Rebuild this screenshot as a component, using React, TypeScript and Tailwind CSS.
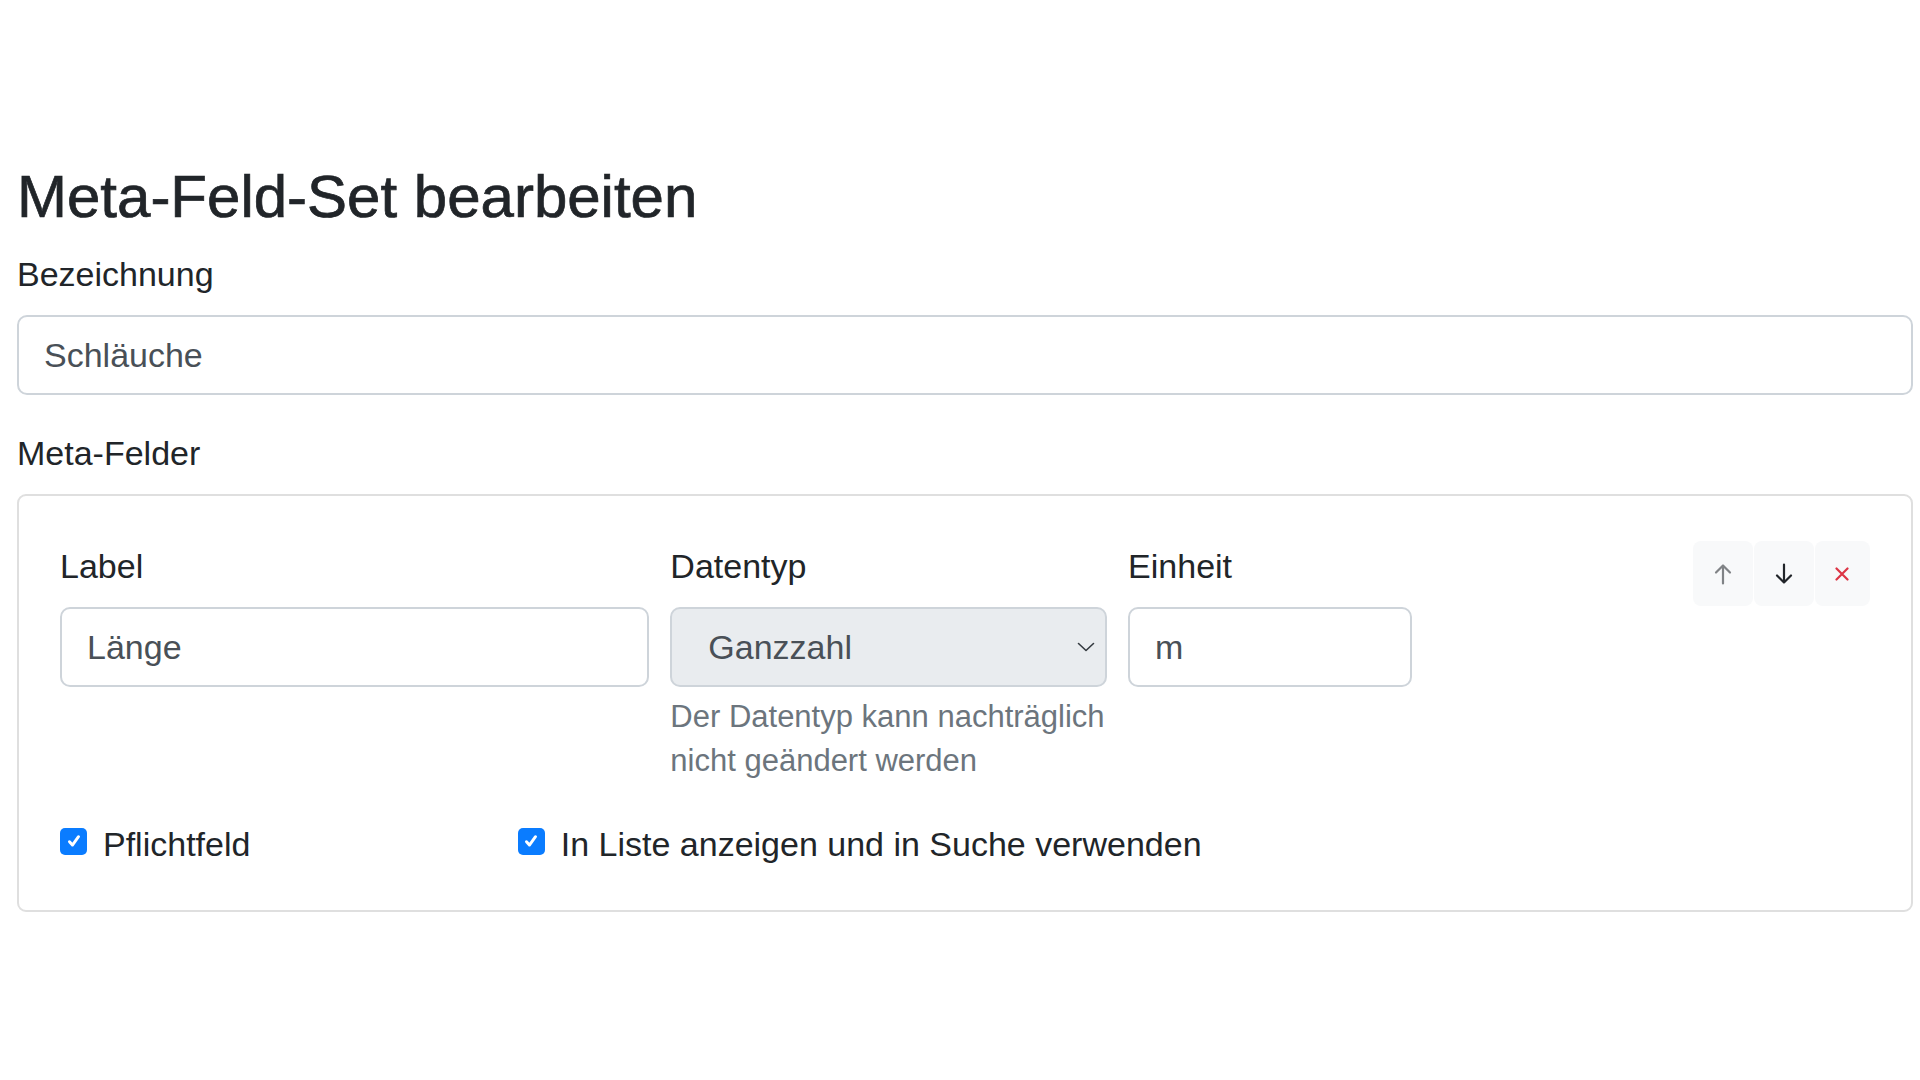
import React from "react";

const font = { fontFamily: '"Liberation Sans", Arial, sans-serif' };

function FieldLabel({ children }: { children: React.ReactNode }) {
  return <label className="block text-[34px] leading-[50px] text-[#212529] mb-[16px]">{children}</label>;
}

function TextInput({ value, className = "" }: { value: string; className?: string }) {
  return (
    <div
      className={`h-[80px] flex items-center px-[25px] bg-white border-2 border-[#ced4da] rounded-[10px] text-[34px] text-[#495057] ${className}`}
    >
      {value}
    </div>
  );
}

function Checkbox({ label }: { label: string }) {
  return (
    <label className="flex items-center gap-[16px] text-[34px] leading-[50px] text-[#212529]">
      <span className="w-[27px] h-[27px] rounded-[5px] bg-[#0a7cff] flex items-center justify-center -mt-[6px]">
        <svg width="18" height="18" viewBox="0 0 16 16" fill="none">
          <path d="M4 8.6l2.6 3L12 4.2" stroke="white" strokeWidth="2.6" strokeLinecap="round" strokeLinejoin="round" />
        </svg>
      </span>
      {label}
    </label>
  );
}

function IconButton({ children, className = "" }: { children: React.ReactNode; className?: string }) {
  return (
    <button className={`h-[65px] flex items-center justify-center bg-[#f8f9fa] rounded-[8px] ${className}`}>
      {children}
    </button>
  );
}

// arrow with a long shaft and open chevron head; rotate for "down"
function Arrow({ color, down = false }: { color: string; down?: boolean }) {
  return (
    <svg width="18" height="22" viewBox="0 0 18 22" fill="none" className={down ? "rotate-180" : ""}>
      <path d="M9 2.5V20.5M2 9.5L9 2.5L16 9.5" stroke={color} strokeWidth="2.2" strokeLinecap="round" strokeLinejoin="round" />
    </svg>
  );
}

export default function App() {
  return (
    <div className="min-h-screen bg-white pl-[17px] pr-[7px] pt-[161px]" style={font}>
      <h2 className="text-[60px] leading-[72px] font-medium text-[#212529] mb-[16px] [-webkit-text-stroke:0.7px_#212529]">
        Meta-Feld-Set bearbeiten
      </h2>

      <div className="mb-[33px]">
        <FieldLabel>Bezeichnung</FieldLabel>
        <TextInput value="Schläuche" />
      </div>

      <FieldLabel>Meta-Felder</FieldLabel>
      <div className="border-2 border-[#dfdfdf] rounded-[9px] px-[41px] pt-[45px] pb-[41px]">
        <div className="grid grid-cols-12 gap-x-[21px]">
          <div className="col-span-4">
            <FieldLabel>Label</FieldLabel>
            <TextInput value="Länge" />
          </div>
          <div className="col-span-3">
            <FieldLabel>Datentyp</FieldLabel>
            <div className="h-[80px] flex items-center justify-between pl-[36px] pr-[10px] bg-[#e9ecef] border-2 border-[#ced4da] rounded-[10px] text-[34px] text-[#495057]">
              <span>Ganzzahl</span>
              <svg width="18" height="10" viewBox="0 0 18 10" fill="none">
                <path d="M1.5 1.5l7.5 7 7.5-7" stroke="#343a40" strokeWidth="1.6" strokeLinecap="round" strokeLinejoin="round" />
              </svg>
            </div>
            <p className="mt-[8px] text-[31px] leading-[44px] text-[#6c757d]">
              Der Datentyp kann nachträglich nicht geändert werden
            </p>
          </div>
          <div className="col-span-2">
            <FieldLabel>Einheit</FieldLabel>
            <TextInput value="m" />
          </div>
          <div className="col-span-3 flex justify-end items-start">
            <div className="flex gap-[1px]">
              <IconButton className="w-[60px]">
                <Arrow color="#808386" />
              </IconButton>
              <IconButton className="w-[60px]">
                <Arrow color="#212529" down />
              </IconButton>
              <IconButton className="w-[55px]">
                <svg width="14" height="14" viewBox="0 0 14 14" fill="none">
                  <path d="M1.5 1.5l11 11M12.5 1.5l-11 11" stroke="#dc3545" strokeWidth="2.2" strokeLinecap="round" />
                </svg>
              </IconButton>
            </div>
          </div>
        </div>

        <div className="grid grid-cols-12 gap-x-[21px] mt-[36px]">
          <div className="col-span-3">
            <Checkbox label="Pflichtfeld" />
          </div>
          <div className="col-span-9">
            <Checkbox label="In Liste anzeigen und in Suche verwenden" />
          </div>
        </div>
      </div>
    </div>
  );
}
